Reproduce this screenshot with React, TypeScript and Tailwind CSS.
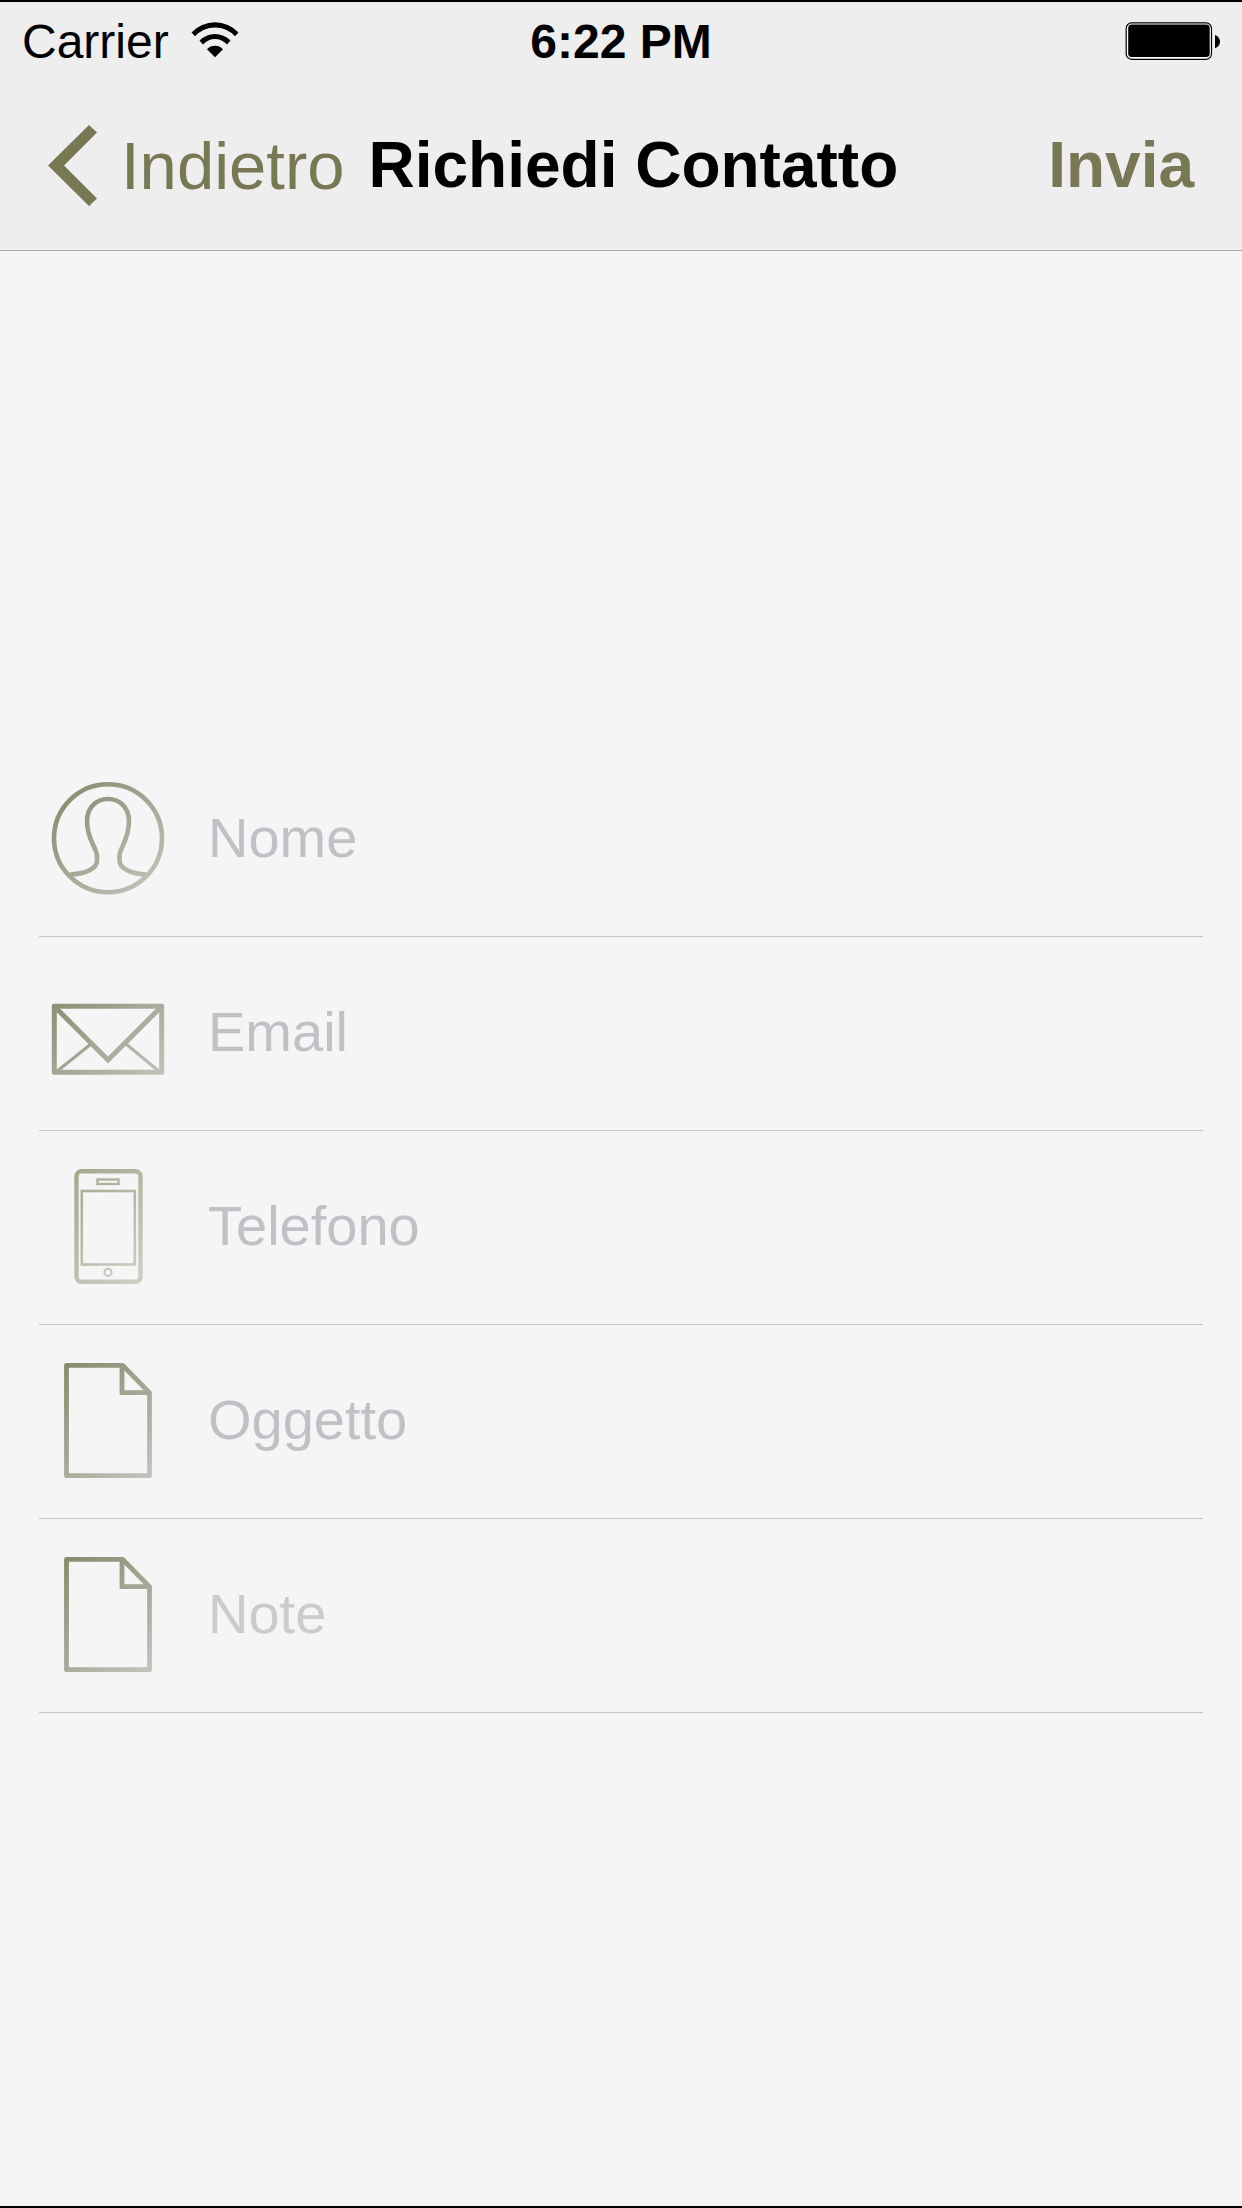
import { FormEvent, ReactNode, useState } from 'react';

type FieldName = 'nome' | 'email' | 'telefono' | 'oggetto' | 'note';

interface IconProps {
  id: string;
}

function IconFrame({ id, light, children }: { id: string; light?: boolean; children: ReactNode }) {
  return (
    <svg
      viewBox="0 0 116 116"
      className="w-[116px] h-[116px] shrink-0"
      fill="none"
      stroke={`url(#${id})`}
      aria-hidden="true"
    >
      <defs>
        <linearGradient id={id} gradientUnits="userSpaceOnUse" x1="10" y1="5" x2="105" y2="110">
          <stop offset="0" stopColor={light ? '#a3a58a' : '#88896c'} />
          <stop offset="1" stopColor={light ? '#cfd1ca' : '#c2c3bc'} />
        </linearGradient>
      </defs>
      {children}
    </svg>
  );
}

function UserIcon({ id }: IconProps) {
  return (
    <IconFrame id={id}>
      <circle cx="58" cy="58.3" r="54" strokeWidth="4.6" />
      <path
        d="M20 94.5C34 94 47 89 47 81V76C47 68 37 60 37 41C37 28 46 19 58 19C70 19 79 28 79 41C79 60 69.5 68 69.5 76V81C69.5 89 83 94 96.5 94.5"
        strokeWidth="4.6"
      />
    </IconFrame>
  );
}

function MailIcon({ id }: IconProps) {
  return (
    <IconFrame id={id}>
      <path d="M4.3 32.2H111.7V98.3H4.3Z" strokeWidth="5" strokeLinejoin="round" />
      <path d="M5 33L58 86L111 33" strokeWidth="5" />
      <path d="M5.5 98.5L41 70M110.5 98.5L76 70" strokeWidth="3.2" />
    </IconFrame>
  );
}

function PhoneIcon({ id }: IconProps) {
  return (
    <IconFrame id={id} light>
      <rect x="26.5" y="3.3" width="64" height="110.5" rx="5" strokeWidth="4.4" />
      <rect x="47.5" y="11.5" width="21" height="4.5" strokeWidth="2.4" />
      <rect x="31.8" y="23" width="53" height="73.5" strokeWidth="2.6" />
      <circle cx="58" cy="104.3" r="3.6" strokeWidth="2" />
    </IconFrame>
  );
}

function PageIcon({ id }: IconProps) {
  return (
    <IconFrame id={id}>
      <path d="M16.500 3.300H72.500L99.500 30.700V113.700H16.500Z" strokeWidth="4.8" strokeLinejoin="round" />
      <path d="M72 4V30.700H99" strokeWidth="4.8" />
    </IconFrame>
  );
}

function WifiIcon() {
  return (
    <svg viewBox="0 0 48 40" className="w-12 h-10" aria-hidden="true">
      <path d="M0.5 10.4A32.5 32.5 0 0 1 47.5 10.4L44 14.3A27 27 0 0 0 4 14.3Z" />
      <path d="M8.5 18.6A21.5 21.5 0 0 1 39.5 18.6L36 22.5A16 16 0 0 0 12 22.5Z" />
      <path d="M16 27.2A11 11 0 0 1 32 27.2L24 35.2Z" />
    </svg>
  );
}

function BatteryIcon() {
  return (
    <svg viewBox="0 0 95 40" className="w-[95px] h-10" aria-hidden="true">
      <rect x="1.2" y="0.9" width="85.3" height="36.4" rx="5.5" fill="#fff" stroke="#000" strokeWidth="1.2" />
      <rect x="3.2" y="2.6" width="81.5" height="32.4" rx="3.5" />
      <path d="M90 13C93.5 14.5 95 17 95 19.5C95 22.5 93.5 25 90 26.3Z" />
    </svg>
  );
}

const fields = [
  { name: 'nome', label: 'Nome', type: 'text', Icon: UserIcon },
  { name: 'email', label: 'Email', type: 'email', Icon: MailIcon },
  { name: 'telefono', label: 'Telefono', type: 'tel', Icon: PhoneIcon },
  { name: 'oggetto', label: 'Oggetto', type: 'text', Icon: PageIcon },
  { name: 'note', label: 'Note', type: 'multiline', Icon: PageIcon },
] as const;

export default function App() {
  const [values, setValues] = useState<Record<FieldName, string>>({
    nome: '',
    email: '',
    telefono: '',
    oggetto: '',
    note: '',
  });

  const update = (name: FieldName, value: string) => {
    setValues((prev) => ({ ...prev, [name]: value }));
  };

  const submit = (event: FormEvent) => {
    event.preventDefault();
  };

  return (
    <div className="min-h-screen bg-[#f5f5f5] border-y-2 border-black text-black font-['Liberation_Sans',Arial,sans-serif]">
      <header className="bg-[#eeeeee] border-b border-[#aaaaaa]">
        <div className="grid grid-cols-3 items-center h-20 px-[22px] text-[48px] leading-none">
          <div className="flex items-center gap-[22px]">
            <span>Carrier</span>
            <WifiIcon />
          </div>
          <time className="text-center font-bold">6:22 PM</time>
          <div className="flex justify-end">
            <BatteryIcon />
          </div>
        </div>

        <nav className="flex items-center h-[168px] pb-[2px] px-12 leading-none">
          <button type="button" className="flex items-center gap-6 text-[67px] text-[#787855]">
            <svg viewBox="0 0 49 81" className="w-[49px] h-[81px]" fill="currentColor" aria-hidden="true">
              <path d="M41 0L49 7.5L16 40.5L49 73.5L41 81L0 40.5Z" />
            </svg>
            Indietro
          </button>
          <h1 className="ml-6 text-[64px] font-bold whitespace-nowrap">Richiedi Contatto</h1>
          <button type="submit" form="contatto" className="ml-auto text-[64px] font-bold text-[#787855]">
            Invia
          </button>
        </nav>
      </header>

      <form id="contatto" onSubmit={submit} className="mt-[492px] mx-[39px]">
        {fields.map(({ name, label, type, Icon }) => (
          <label
            key={name}
            htmlFor={name}
            className="flex items-center gap-[42px] h-[194px] pl-[11px] pb-[3px] border-b border-[#c6c6c8]"
          >
            <Icon id={`icon-${name}`} />
            {type === 'multiline' ? (
              <textarea
                id={name}
                rows={1}
                aria-label={label}
                placeholder={label}
                value={values[name]}
                onChange={(e) => update(name, e.target.value)}
                className="flex-1 min-w-0 h-16 text-[56px] leading-[64px] resize-none overflow-hidden bg-transparent outline-none placeholder:text-[#cbcbcb]"
              />
            ) : (
              <input
                id={name}
                type={type}
                aria-label={label}
                placeholder={label}
                value={values[name]}
                onChange={(e) => update(name, e.target.value)}
                className="flex-1 min-w-0 h-16 text-[56px] leading-[64px] bg-transparent outline-none placeholder:text-[#c1c0c6]"
              />
            )}
          </label>
        ))}
      </form>
    </div>
  );
}
